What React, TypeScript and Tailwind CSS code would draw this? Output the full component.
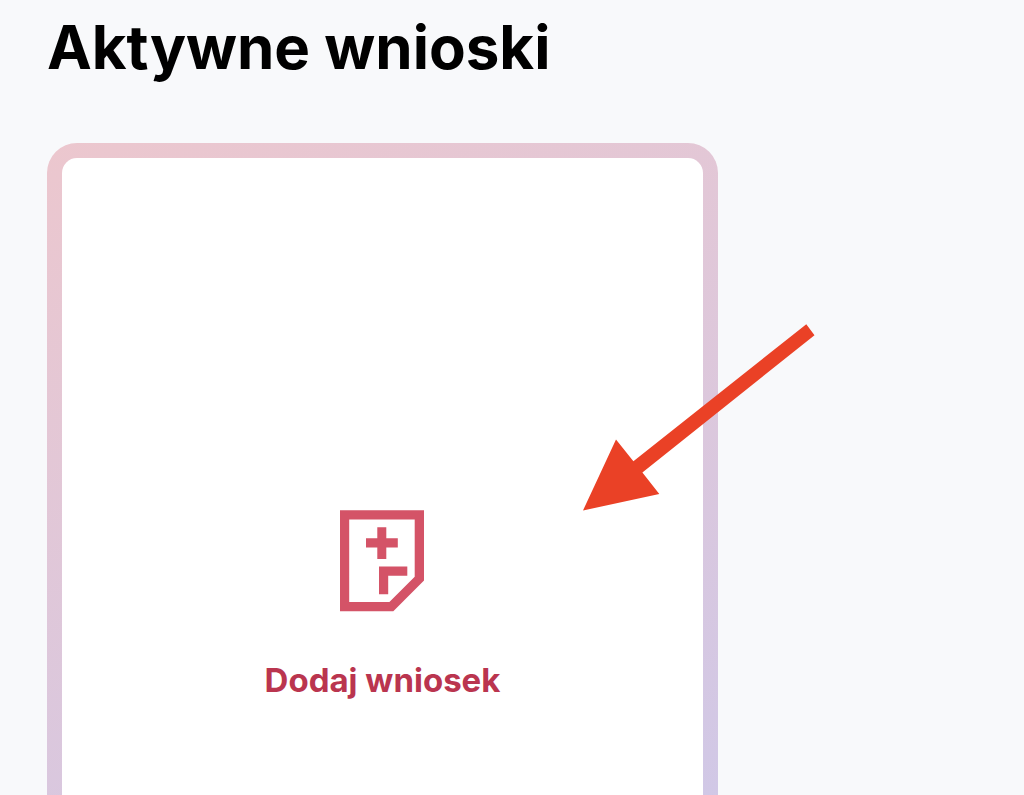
function AddDocumentIcon() {
  return (
    <svg
      className="h-[102px] w-[86px]"
      viewBox="0 0 86 102"
      fill="#d45367"
      aria-hidden="true"
    >
      <path
        fillRule="evenodd"
        d="M0 0.3H84V70.5L53.3 101.2H0ZM9.2 9.5V92H49.4L74.7 66.7V9.5Z"
      />
      <path d="M37.3 17.3H46.3V28.3H57.8V37.6H46.3V49H37.3V37.6H26V28.3H37.3Z" />
      <path d="M39 56.5H67.3V65.8H48.2V84.3H39Z" />
    </svg>
  );
}

function PointerArrow() {
  return (
    <svg
      className="pointer-events-none absolute left-[583px] top-[324px] h-[187px] w-[232px]"
      viewBox="0 0 232 187"
      fill="#ea4126"
      aria-hidden="true"
    >
      <path d="M0 186.5L33 115.5L50.4 137.2L223.3 0.2L231.5 11.2L59.4 148.6L76.3 170Z" />
    </svg>
  );
}

export default function App() {
  return (
    <main className="relative h-screen overflow-hidden bg-[#f8f9fb] px-[47px] pt-[11px] font-['Inter',sans-serif]">
      <h1 className="text-[60px] leading-[72px] font-bold text-black">Aktywne wnioski</h1>
      <button
        type="button"
        className="mt-[60px] block w-full max-w-[671px] rounded-[30px] bg-[linear-gradient(155deg,#ecc7ce,#c9c8ed)] p-[15px]"
      >
        <span className="flex min-h-[896px] flex-col items-center justify-center gap-[46px] rounded-[15px] bg-white">
          <AddDocumentIcon />
          <span className="text-[33px] leading-[44px] font-bold text-[#ba354f]">
            Dodaj wniosek
          </span>
        </span>
      </button>
      <PointerArrow />
    </main>
  );
}
